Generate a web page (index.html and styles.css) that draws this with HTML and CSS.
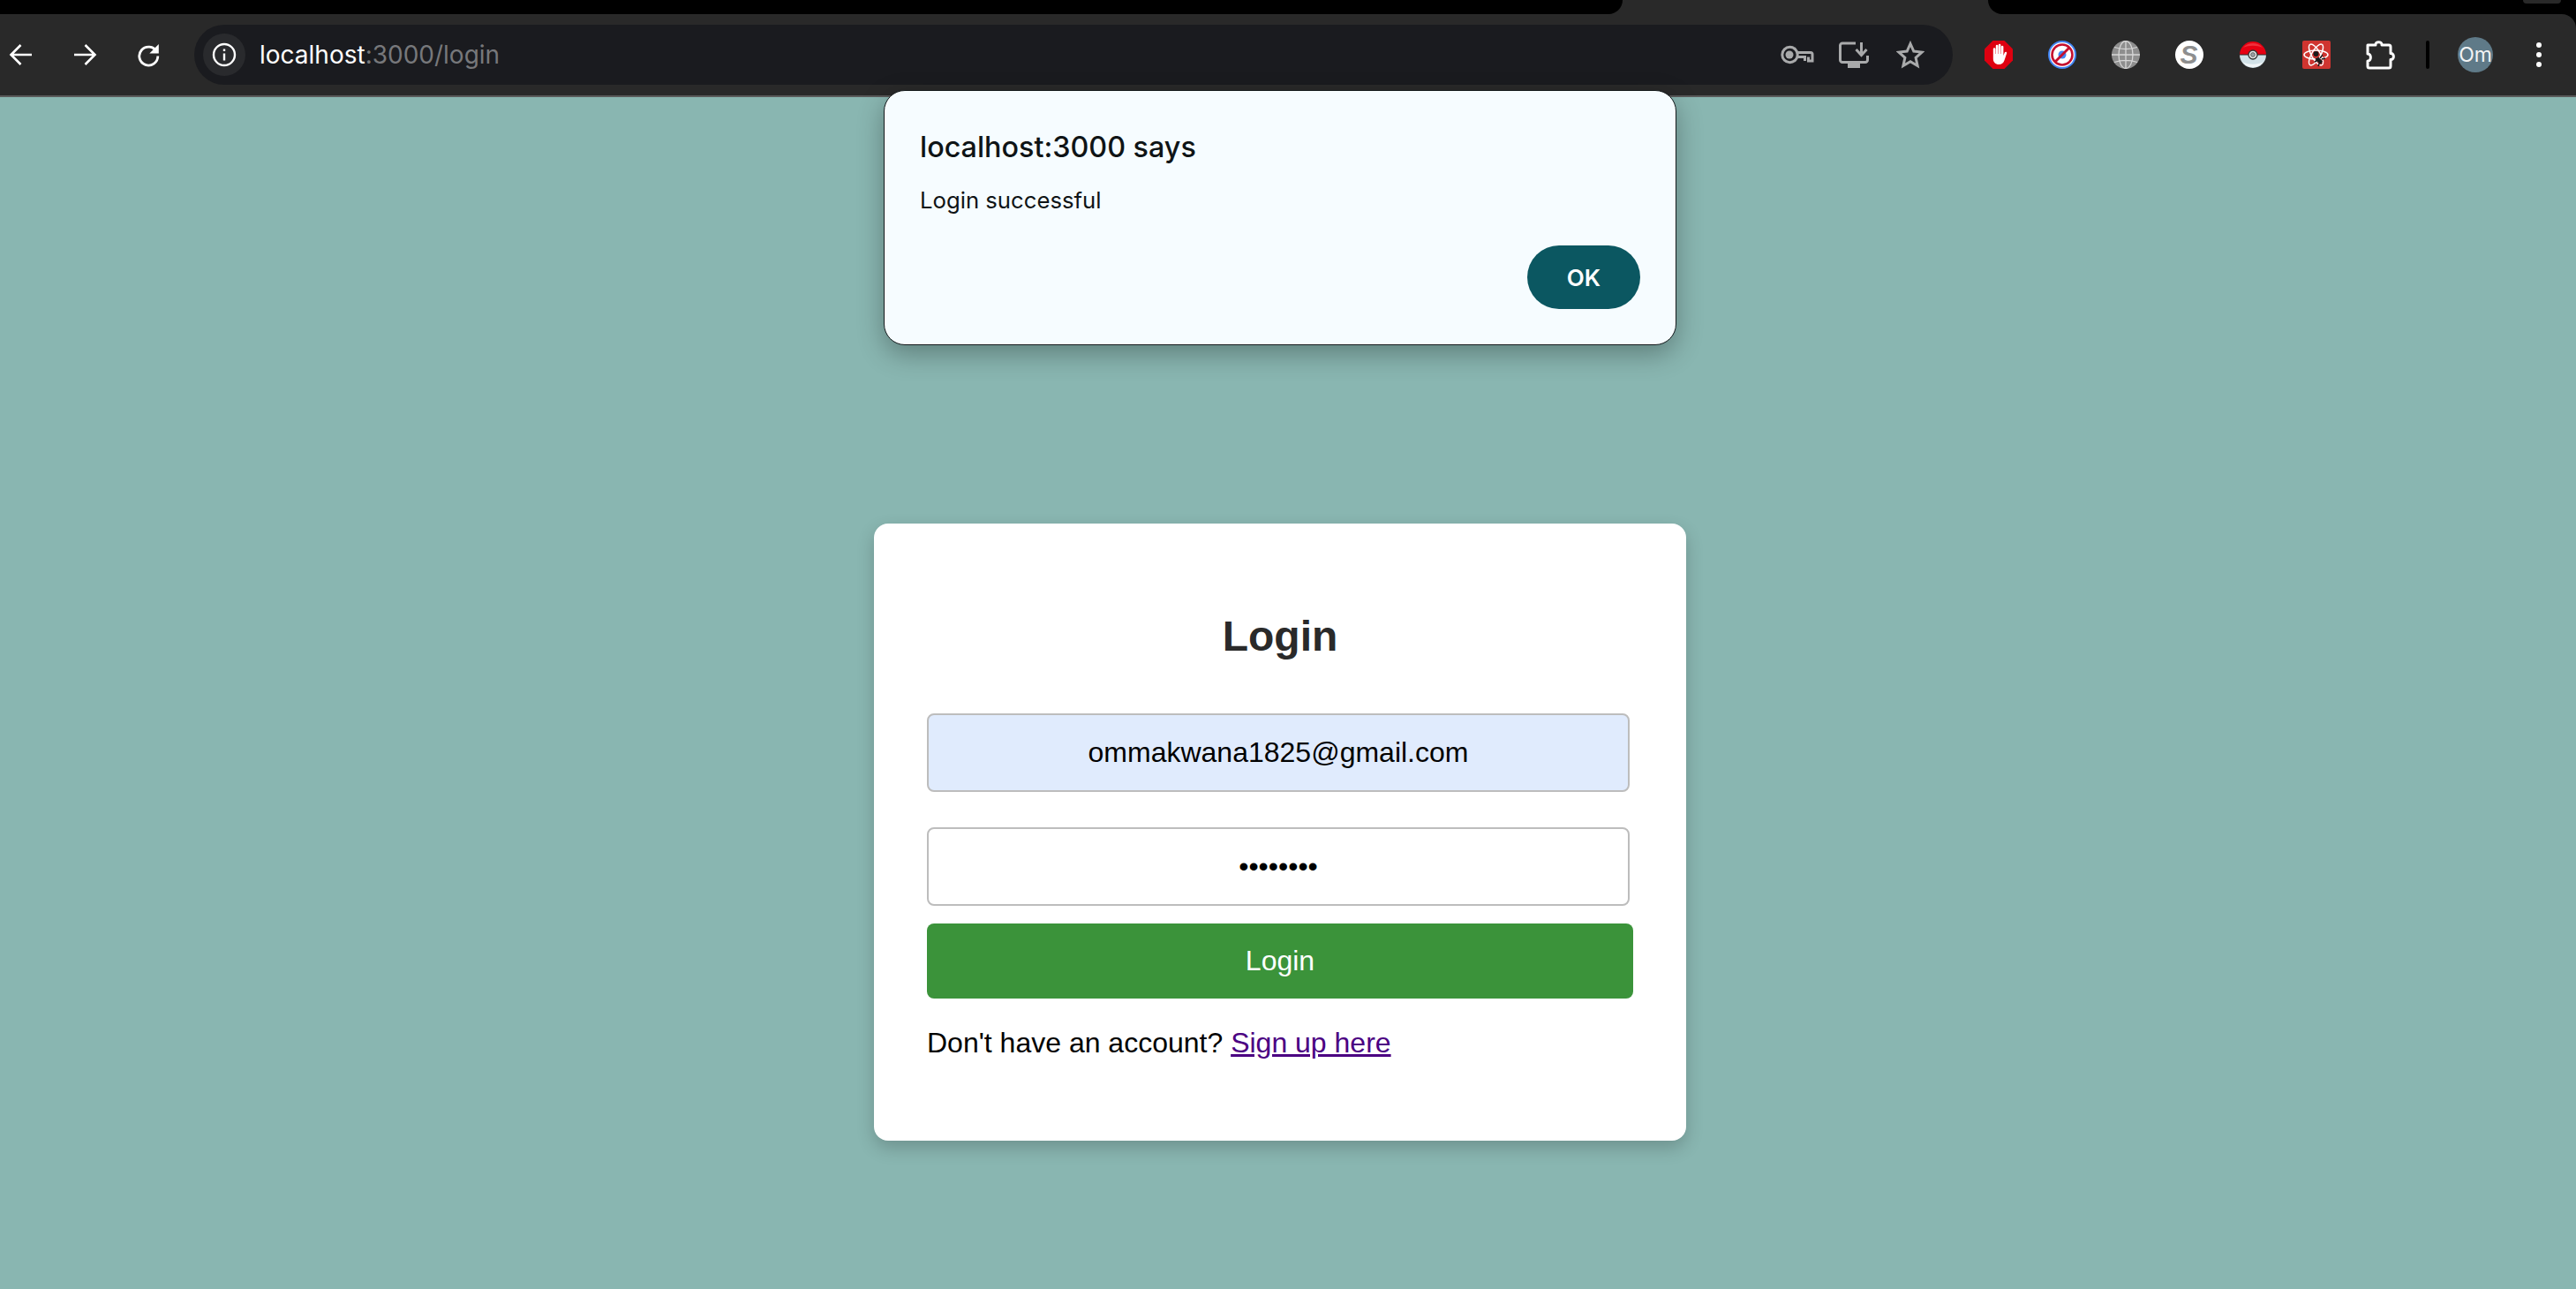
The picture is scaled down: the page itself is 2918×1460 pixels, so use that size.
FILE: index.html
```html
<!DOCTYPE html>
<html lang="en">
<head>
    <meta charset="UTF-8">
    <title>Login</title>
    <link rel="stylesheet" href="styles.css">
</head>
<body>
    <div class="browser-chrome">
        <div class="tab-strip">
            <div class="tab-strip-left"></div>
            <div class="tab-strip-right">
                <div class="tab-stub"></div>
            </div>
        </div>

        <div class="toolbar">
            <div class="nav-buttons">
                <div class="tool-btn">
                    <svg width="28" height="28" viewBox="0 0 28 28" fill="none" stroke="#fff" stroke-width="2.600">
                        <path d="M26 14H3M13.500 3 2.500 14l11 11"/>
                    </svg>
                </div>
                <div class="tool-btn">
                    <svg width="28" height="28" viewBox="0 0 28 28" fill="none" stroke="#fff" stroke-width="2.600">
                        <path d="M2 14h23M14.500 3l11 11-11 11"/>
                    </svg>
                </div>
                <div class="tool-btn">
                    <svg width="28" height="28" viewBox="0 0 28 28" fill="none" stroke="#fff" stroke-width="2.800">
                        <path d="M23.500 10.500A10.500 10.500 0 1 0 24.800 15.500"/>
                        <path d="M25.800 2v10.500h-10.500z" fill="#fff" stroke="none"/>
                    </svg>
                </div>
            </div>

            <div class="omnibox">
                <div class="site-info">
                    <svg width="28" height="28" viewBox="0 0 28 28" fill="none" stroke="#fff" stroke-width="2.400">
                        <circle cx="14" cy="14" r="12"/>
                        <path d="M14 12.500v8M14 7.500v2.600"/>
                    </svg>
                </div>
                <div class="url"><span class="url-host">localhost</span>:3000/login</div>
                <div class="omni-btn">
                    <svg width="38" height="24" viewBox="0 0 38 24" fill="none" stroke="#a9aaab" stroke-width="3">
                        <circle cx="10.500" cy="12" r="8.700"/>
                        <circle cx="10" cy="12" r="4.500" fill="#a9aaab" stroke="none"/>
                        <path d="M19 9.500h15a2 2 0 0 1 2 2V19h-4.500v-4.500M27.500 19v-4.500H19"/>
                    </svg>
                </div>
                <div class="omni-btn">
                    <svg width="34" height="30" viewBox="0 0 34 30" fill="none" stroke="#a9aaab" stroke-width="3">
                        <path d="M19 2H4a2.500 2.500 0 0 0-2.500 2.500v16.500A2.500 2.500 0 0 0 4 23.500h26a2.500 2.500 0 0 0 2.500-2.500V16"/>
                        <path d="M10 27.500h14" stroke-width="5"/>
                        <path d="M25.500 1v12M19.500 9l6 6.500 6-6.500"/>
                    </svg>
                </div>
                <div class="omni-btn">
                    <svg width="32" height="32" viewBox="0 0 32 32" fill="none" stroke="#a9aaab" stroke-width="3" stroke-linejoin="miter">
                        <path d="M16 3.500l3.800 8.600 9.300 1-7 6.200 2 9.200-8.100-4.700-8.100 4.700 2-9.200-7-6.200 9.300-1z"/>
                    </svg>
                </div>
            </div>

            <div class="extensions">
                <div class="tool-btn">
                    <svg width="32" height="32" viewBox="0 0 32 32">
                        <path d="M9.500 0h13L32 9.500v13L22.500 32h-13L0 22.500v-13z" fill="#de0010"/>
                        <path d="M9.800 18V9.500a1.300 1.300 0 0 1 2.600 0V15h.4V6a1.300 1.300 0 0 1 2.600 0V15h.4V5a1.300 1.300 0 0 1 2.600 0V15h.4V7a1.300 1.300 0 0 1 2.600 0V17l1.400-3.400c.6-1.400 2.800-.8 2.400.7l-2.600 7.700c-1 3.300-3.200 5-6.300 5-3.800 0-6.500-2.600-6.500-6.500z" fill="#fff"/>
                    </svg>
                </div>
                <div class="tool-btn">
                    <svg width="32" height="32" viewBox="0 0 32 32">
                        <circle cx="16" cy="16" r="15" fill="#fff" stroke="#4285f4" stroke-width="2"/>
                        <circle cx="16" cy="16" r="11.500" fill="#fff" stroke="#c4102f" stroke-width="2.600"/>
                        <circle cx="16" cy="16" r="4.500" fill="#4285f4"/>
                        <path d="M8 24 24 8" stroke="#c4102f" stroke-width="2.800"/>
                    </svg>
                </div>
                <div class="tool-btn">
                    <svg width="32" height="32" viewBox="0 0 32 32" fill="none" stroke="#d6d6d6" stroke-width="1.300">
                        <circle cx="16" cy="16" r="16" fill="#8e8e8e" stroke="none"/>
                        <ellipse cx="16" cy="16" rx="8" ry="15.500"/>
                        <path d="M16 0v32M0 16h32M3 7.500c8 2.500 18 2.500 26 0M3 24.500c8-2.500 18-2.500 26 0"/>
                    </svg>
                </div>
                <div class="tool-btn">
                    <svg width="32" height="32" viewBox="0 0 32 32">
                        <circle cx="16" cy="16" r="16" fill="#fff"/>
                        <text x="15.500" y="26" class="s-mark">S</text>
                    </svg>
                </div>
                <div class="tool-btn">
                    <svg width="32" height="32" viewBox="0 0 32 32">
                        <path d="M1 16a15 15 0 0 1 30 0z" fill="#e60012"/>
                        <path d="M5 8a14.500 14.500 0 0 1 22 0c-6-3-16-3-22 0z" fill="#f0303c"/>
                        <path d="M1 16a15 15 0 0 0 30 0z" fill="#d2e2e8"/>
                        <path d="M4 24a15 15 0 0 0 24 0c-6 3.500-18 3.500-24 0z" fill="#f2f6f8"/>
                        <path d="M1 16h30" stroke="#2a2a2a" stroke-width="1"/>
                        <circle cx="16" cy="16" r="5" fill="#e8e8e8" stroke="#333" stroke-width="1.300"/>
                        <circle cx="16" cy="16" r="2.400" fill="#9aa0a4" stroke="#555" stroke-width=".8"/>
                    </svg>
                </div>
                <div class="tool-btn">
                    <svg width="32" height="32" viewBox="0 0 32 32">
                        <rect width="32" height="32" rx="2" fill="#cf3530"/>
                        <g fill="none" stroke="#fff" stroke-width="1.500">
                            <ellipse cx="15.500" cy="16" rx="13.500" ry="5"/>
                            <ellipse cx="15.500" cy="16" rx="13.500" ry="5" transform="rotate(60 15.500 16)"/>
                            <ellipse cx="15.500" cy="16" rx="13.500" ry="5" transform="rotate(120 15.500 16)"/>
                        </g>
                        <circle cx="15.500" cy="15" r="3" fill="#1a1a1a"/>
                        <g fill="none" stroke="#1a1a1a" stroke-width="1.500">
                            <path d="M15 20l7 6M23 16l-3 4M26 20l-4 1M14 24l4-2M18 29l2-5"/>
                        </g>
                        <path d="M18 18.500l5 5-3 3-5-5z" fill="#1a1a1a"/>
                    </svg>
                </div>
                <div class="tool-btn puzzle-btn">
                    <svg width="34" height="34" viewBox="0 0 34 34" fill="#292929" stroke="#fff" stroke-width="3" stroke-linejoin="round">
                        <path d="M3 6h9c-.6-4.500 7.500-4.500 7 0h8a2 2 0 0 1 2 2v7.500c4.500-.6 4.500 7.500 0 7V30a2 2 0 0 1-2 2H5a2 2 0 0 1-2-2v-6c4.500.5 4.500-8.500 0-8V6z"/>
                    </svg>
                </div>
            </div>

            <div class="separator"></div>
            <div class="avatar">Om</div>
            <div class="tool-btn">
                <svg width="10" height="32" viewBox="0 0 10 32" fill="#fff">
                    <circle cx="5" cy="5" r="3"/>
                    <circle cx="5" cy="16" r="3"/>
                    <circle cx="5" cy="27" r="3"/>
                </svg>
            </div>
        </div>
    </div>

    <div class="page">
        <div class="login-card">
            <h2>Login</h2>
            <form class="login-form">
                <input class="field field-autofill" type="email" value="ommakwana1825@gmail.com">
                <input class="field" type="password" value="password">
                <button class="login-btn" type="button">Login</button>
            </form>
            <p class="signup-text">Don't have an account? <a class="signup-link" href="#">Sign up here</a></p>
        </div>
    </div>

    <!-- browser alert sits over the page -->
    <div class="alert-box">
        <div class="alert-title">localhost:3000 says</div>
        <div class="alert-message">Login successful</div>
        <div class="alert-actions">
            <button class="alert-ok" type="button">OK</button>
        </div>
    </div>
</body>
</html>
```

FILE: styles.css
```css
* {
    box-sizing: border-box;
}

html, body {
    margin: 0;
    height: 100%;
    overflow: hidden;
}

body {
    font-family: "Liberation Sans", Arial, sans-serif;
    background-color: #89b6b1;
    display: flex;
    flex-direction: column;
}

/* Browser chrome */
.browser-chrome {
    flex-shrink: 0;
    background-color: #000;
}

.tab-strip {
    height: 16px;
    background-color: #292929;
    display: flex;
    justify-content: space-between;
}

.tab-strip-left {
    width: 1838px;
    background-color: #000;
    border-bottom-right-radius: 16px;
}

.tab-strip-right {
    width: 666px;
    background-color: #000;
    border-bottom-left-radius: 16px;
    display: flex;
    justify-content: flex-end;
}

.tab-stub {
    width: 43px;
    height: 4px;
    margin-right: 17px;
    background-color: #292929;
    border-radius: 0 0 14px 14px;
}

.toolbar {
    height: 94px;
    background-color: #292929;
    border-bottom: 2px solid #5a5a5a;
    border-top-right-radius: 16px;
    display: flex;
    align-items: center;
    padding-right: 6px;
    font-family: Inter, "Noto Sans", sans-serif;
}

.nav-buttons {
    display: flex;
    margin-left: -12px;
}

.tool-btn {
    width: 72px;
    height: 48px;
    display: flex;
    align-items: center;
    justify-content: center;
    flex-shrink: 0;
}

.omnibox {
    flex: 1;
    height: 68px;
    margin-left: 16px;
    padding: 0 16px 0 10px;
    border-radius: 34px;
    background-color: #1a1b1f;
    display: flex;
    align-items: center;
}

.site-info {
    width: 48px;
    height: 48px;
    border-radius: 50%;
    background-color: #292a2d;
    display: flex;
    align-items: center;
    justify-content: center;
}

.url {
    flex: 1;
    margin-left: 16px;
    font-size: 28px;
    color: #77787b;
}

.url-host {
    color: #fff;
}

.omni-btn {
    width: 64px;
    display: flex;
    justify-content: center;
}

.extensions {
    display: flex;
    margin-left: 16px;
}

.s-mark {
    font-family: "Liberation Sans", sans-serif;
    font-size: 30px;
    font-weight: bold;
    font-style: italic;
    fill: #8e8e8e;
    text-anchor: middle;
}

.separator {
    width: 4px;
    height: 32px;
    margin-left: 16px;
    border-radius: 2px;
    background-color: #000;
}

.avatar {
    width: 40px;
    height: 40px;
    margin: 0 16px 0 32px;
    border-radius: 50%;
    background-color: #5f7a88;
    color: #f2f4f5;
    font-size: 23px;
    display: flex;
    align-items: center;
    justify-content: center;
    flex-shrink: 0;
}

/* Login page */
.page {
    flex: 1;
    padding: 483px 18px 0 0;
    display: flex;
    justify-content: center;
}

.login-card {
    width: 920px;
    height: 699px;
    padding: 60px;
    background-color: #fff;
    border-radius: 16px;
    box-shadow: 0 8px 20px rgba(0, 0, 0, 0.2);
}

.login-card h2 {
    margin: 32px 0 52px;
    height: 71px;
    line-height: 71px;
    font-size: 48px;
    text-align: center;
    color: #2a2a2a;
}

.login-form {
    display: flex;
    flex-direction: column;
    align-items: flex-start;
}

.field {
    width: 796px;
    height: 89px;
    margin-bottom: 40px;
    padding: 0 20px;
    border: 2px solid #bdbdbd;
    border-radius: 8px;
    font-family: "Liberation Sans", Arial, sans-serif;
    font-size: 32px;
    text-align: center;
    color: #000;
    background-color: #fff;
}

.field-autofill {
    background-color: #e0ebfd;
}

.field[type="password"] {
    margin-bottom: 20px;
}

.login-btn {
    width: 800px;
    height: 85px;
    border: none;
    border-radius: 8px;
    background-color: #3b933a;
    color: #fff;
    font-family: "Liberation Sans", Arial, sans-serif;
    font-size: 32px;
}

.signup-text {
    margin: 32px 0 0;
    font-size: 32px;
    color: #000;
}

.signup-link {
    color: #4b0082;
}

/* Alert dialog */
.alert-box {
    position: absolute;
    top: 102px;
    left: 1001px;
    width: 898px;
    height: 289px;
    padding: 44px 40px 40px 40px;
    background-color: #f6fcff;
    border: 1px solid #14191b;
    border-radius: 24px;
    box-shadow: 0 10px 30px rgba(0, 0, 0, 0.3);
    font-family: Inter, "Noto Sans", sans-serif;
    color: #0f1416;
}

.alert-title {
    font-size: 32.300px;
    font-weight: 500;
    line-height: 40px;
}

.alert-message {
    margin-top: 20px;
    font-size: 25.700px;
    line-height: 40px;
}

.alert-actions {
    display: flex;
    justify-content: flex-end;
    margin-top: 31px;
}

.alert-ok {
    width: 128px;
    height: 72px;
    border: none;
    border-radius: 36px;
    background-color: #0b5761;
    color: #fff;
    font-family: Inter, "Noto Sans", sans-serif;
    font-size: 26px;
    font-weight: 600;
}
```
